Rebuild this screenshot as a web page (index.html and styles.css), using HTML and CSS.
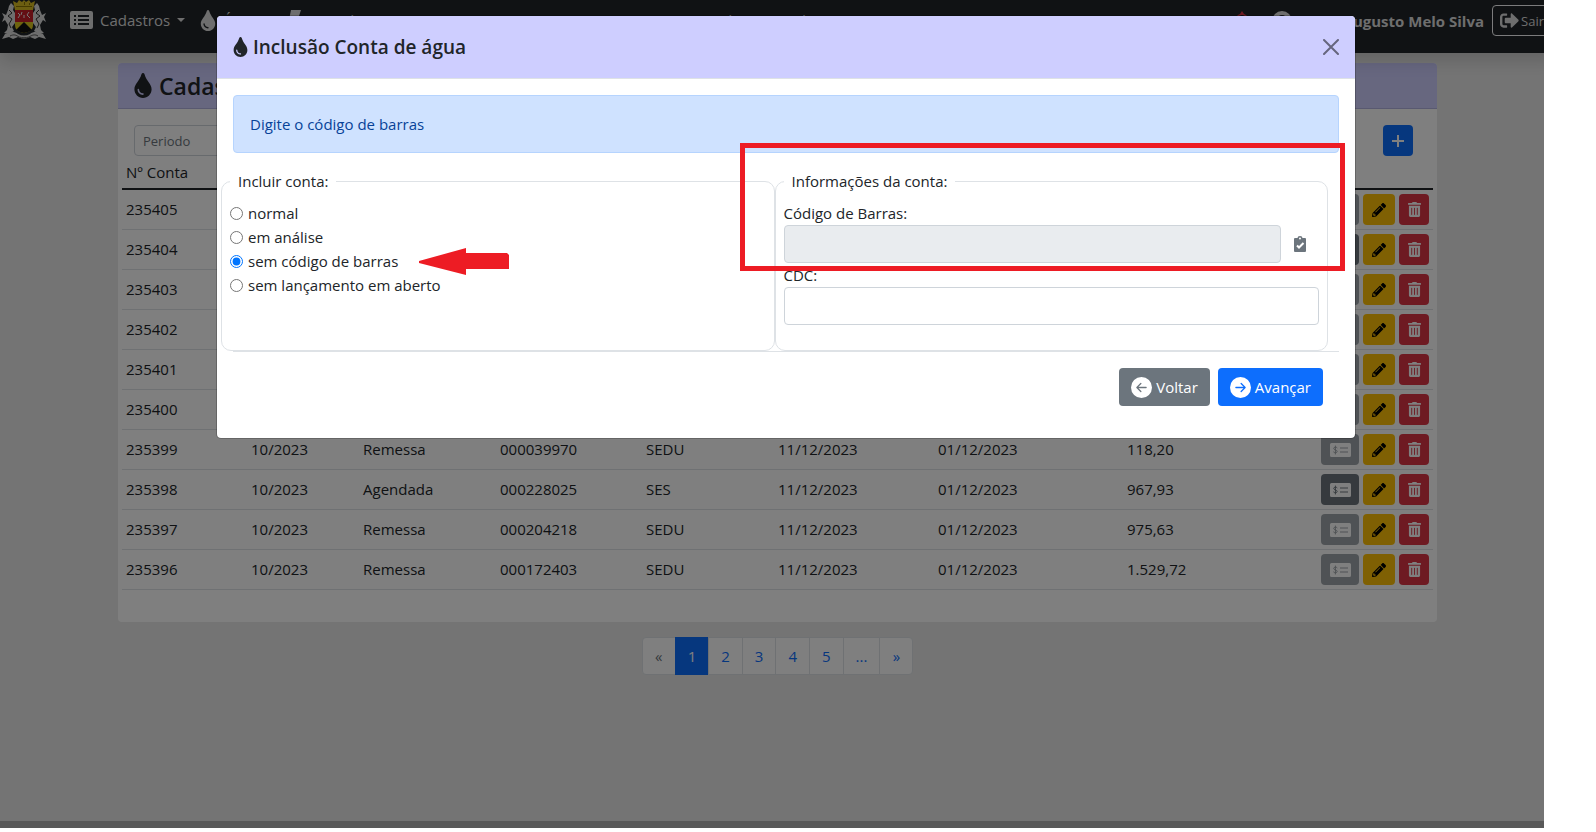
FILE: index.html
```html
<!DOCTYPE html>
<html lang="pt-br">
<head>
    <meta charset="UTF-8">
    <meta name="viewport" content="width=device-width, initial-scale=1.0">
    <title>Cadastro Conta de água</title>
    <link rel="stylesheet" href="styles.css">
</head>
<body>
    <!-- Icons -->
    <svg class="sprite" aria-hidden="true">
        <symbol id="i-drop" viewBox="0 0 352 512"><path d="M205.22 22.09c-7.94-28.78-49.44-30.12-58.44 0C100.01 179.85 0 222.72 0 333.91 0 432.35 78.72 512 176 512s176-79.65 176-178.09c0-111.75-99.79-153.34-146.78-311.82zM176 448c-61.75 0-112-50.25-112-112 0-8.84 7.16-16 16-16s16 7.16 16 16c0 44.11 35.89 80 80 80 8.84 0 16 7.16 16 16s-7.16 16-16 16z"/></symbol>
        <symbol id="i-list" viewBox="0 0 23 18"><path fill-rule="evenodd" d="M2 0h19a2 2 0 0 1 2 2v14a2 2 0 0 1-2 2H2a2 2 0 0 1-2-2V2a2 2 0 0 1 2-2zM4 4v2h2V4zM8 4v2h11V4zM4 8v2h2V8zM8 8v2h11V8zM4 12v2h2v-2zM8 12v2h11v-2z"/></symbol>
        <symbol id="i-exit" viewBox="0 0 512 512"><path d="M497 273L329 441c-15 15-41 4.5-41-17v-96H152c-13.3 0-24-10.7-24-24v-96c0-13.3 10.7-24 24-24h136V88c0-21.4 25.9-32 41-17l168 168c9.3 9.4 9.3 24.6 0 34zM192 436v-40c0-6.6-5.4-12-12-12H96c-17.7 0-32-14.3-32-32V160c0-17.7 14.3-32 32-32h84c6.6 0 12-5.4 12-12V76c0-6.6-5.4-12-12-12H96c-53 0-96 43-96 96v192c0 53 43 96 96 96h84c6.6 0 12-5.4 12-12z"/></symbol>
        <symbol id="i-trash" viewBox="0 0 448 512"><path d="M32 464a48 48 0 0 0 48 48h288a48 48 0 0 0 48-48V128H32zm272-256a16 16 0 0 1 32 0v224a16 16 0 0 1-32 0zm-96 0a16 16 0 0 1 32 0v224a16 16 0 0 1-32 0zm-96 0a16 16 0 0 1 32 0v224a16 16 0 0 1-32 0zM432 32H312l-9.4-18.7A24 24 0 0 0 281.1 0H166.8a23.72 23.72 0 0 0-21.4 13.3L136 32H16A16 16 0 0 0 0 48v32a16 16 0 0 0 16 16h416a16 16 0 0 0 16-16V48a16 16 0 0 0-16-16z"/></symbol>
        <symbol id="i-pencil" viewBox="0 0 512 512"><path d="M497.9 142.1l-46.1 46.1c-4.7 4.7-12.3 4.7-17 0l-111-111c-4.7-4.7-4.7-12.3 0-17l46.1-46.1c18.7-18.7 49.1-18.7 67.9 0l60.1 60.1c18.8 18.7 18.8 49.1 0 67.9zM284.2 99.8L21.6 362.4.4 483.9c-2.9 16.4 11.4 30.6 27.8 27.8l121.5-21.3 262.6-262.6c4.7-4.7 4.7-12.3 0-17l-111-111c-4.8-4.7-12.4-4.7-17.1 0zM124.1 339.9c-5.5-5.5-5.5-14.3 0-19.8l154-154c5.5-5.5 14.3-5.5 19.8 0s5.5 14.3 0 19.8l-154 154c-5.5 5.5-14.3 5.5-19.8 0zM88 424h48v36.3l-64.5 11.3-31.1-31.1L51.7 376H88v48z"/></symbol>
        <symbol id="i-check" viewBox="0 0 21 14"><path fill-rule="evenodd" d="M1.500 0h18A1.500 1.500 0 0 1 21 1.500v11a1.500 1.500 0 0 1-1.500 1.500h-18A1.500 1.500 0 0 1 0 12.500v-11A1.500 1.500 0 0 1 1.500 0zM10 4.500v1h8v-1zM10 8.500v1h8v-1z"/><path class="cut" d="M7.300 5C6.600 3.800 3.700 3.900 3.700 5.400c0 1.700 3.500 1.300 3.500 3.100 0 1.500-3 1.600-3.800.3M5.400 2.600v8.800"/></symbol>
        <symbol id="i-left" viewBox="0 0 16 16"><path d="M8 0a8 8 0 1 0 0 16A8 8 0 0 0 8 0zm3.5 7.500a.5.5 0 0 1 0 1H5.707l2.147 2.146a.5.5 0 0 1-.708.708l-3-3a.5.5 0 0 1 0-.708l3-3a.5.5 0 1 1 .708.708L5.707 7.500H11.500z"/></symbol>
        <symbol id="i-right" viewBox="0 0 16 16"><path d="M8 0a8 8 0 1 1 0 16A8 8 0 0 1 8 0zM4.500 7.500a.5.5 0 0 0 0 1h5.793l-2.147 2.146a.5.5 0 0 0 .708.708l3-3a.5.5 0 0 0 0-.708l-3-3a.5.5 0 1 0-.708.708L10.293 7.500H4.500z"/></symbol>
    </svg>

    <div class="window">
        <div class="app">
            <nav class="navbar">
                <a class="brand" href="#" aria-label="Início">
                    <svg width="44" height="40" viewBox="0 0 44 40">
                        <path fill="#d8bc22" d="M11 1l4 2 2-3 3 2 2-2 2 2 3-2 2 3 4-2-2 9H13z"/>
                        <path fill="#8a7400" d="M14 6h16v1H14zM17 3l1 2M22 2h1v3h-1zM27 3h1v2h-1z"/>
                        <path fill="#dcdcdc" d="M9 3l3 3-1 4 2 3v10l-3 4 2 4-5 3-5-1 3-3 1-5-3-5-3 2 2-5-2-4 4 2 2-5 1-4z"/>
                        <path fill="#dcdcdc" d="M35 3l-3 3 1 4-2 3v10l3 4-2 4 5 3 5-1-3-3-1-5 3-5 3 2-2-5 2-4-4 2-2-5-1-4z"/>
                        <path fill="none" stroke="#333" d="M7 10l3 3-4 3 4 3-3 5 2 4M37 10l-3 3 4 3-4 3 3 5-2 4"/>
                        <path fill="#c81e28" d="M13 10h18v12H13z"/>
                        <path fill="none" stroke="#eee" d="M16 13l2 2-2 3M20 12l-1 3M27 12l-2 3 3 3M22 15v3"/>
                        <path fill="#dcc61e" d="M13 22h18v3c0 5-4 7-9 8-5-1-9-3-9-8z"/>
                        <path fill="#111" d="M22 22l8 8-4 2-4 1-4-1-4-2z"/>
                        <path fill="#dcdcdc" d="M3 34c5-2 9-3 13 0 4 2 8 2 12 0 4-3 8-2 13 0l3 5-7-2-4 2-5-2c-4 2-8 2-12 0l-5 2-4-2-7 2z"/>
                        <path fill="none" stroke="#555" d="M8 36c4-2 6-1 9 1 3 1 7 1 10 0 3-2 6-3 9-1"/>
                    </svg>
                </a>
                <a class="nav-link first" href="#"><svg width="23" height="18"><use href="#i-list"/></svg>Cadastros<span class="caret"></span></a>
                <a class="nav-link" href="#"><svg width="16" height="21"><use href="#i-drop"/></svg>Água<span class="caret"></span></a>
                <a class="nav-link" href="#"><svg width="16" height="20" viewBox="0 0 16 20"><path d="M3 0h10l-2 6h3L6 20l2-10H1z"/></svg>Pagador<span class="caret"></span></a>
                <span class="nav-title">Gestão de Contas de Consumo</span>
                <div class="nav-user">
                    <svg class="bell" width="16" height="20" viewBox="0 0 16 20"><path fill-rule="evenodd" d="M8 0l2 3c3 1 4 3 4 7l2 5H0l2-5c0-4 1-6 4-7zM8 4c-3 0-4 2-4 6l-1 3h10l-1-3c0-4-1-6-4-6zM6 17h4l-2 3z"/></svg>
                    <svg width="20" height="20" viewBox="0 0 20 20"><path fill-rule="evenodd" d="M10 0a10 10 0 1 1 0 20 10 10 0 0 1 0-20zm0 4a4 4 0 1 0 0 8 4 4 0 0 0 0-8z"/></svg>
                    <strong>Allan Augusto Melo Silva</strong>
                    <button class="btn-exit" type="button"><svg width="19" height="19"><use href="#i-exit"/></svg>Sair</button>
                </div>
            </nav>

            <main class="container">
                <section class="card">
                    <h1 class="card-header"><svg width="18" height="25"><use href="#i-drop"/></svg>Cadastro Conta de água</h1>
                    <div class="filter">
                        <input type="text" placeholder="Periodo" aria-label="Periodo">
                        <button class="btn-add" type="button" aria-label="Incluir"><svg width="12" height="12" viewBox="0 0 12 12"><path d="M5 0h2v5h5v2H7v5H5V7H0V5h5z"/></svg></button>
                    </div>
                    <table class="table">
                        <colgroup>
                            <col class="c-conta"><col class="c-periodo"><col class="c-status"><col class="c-cdc"><col class="c-orgao"><col class="c-data"><col class="c-venc"><col><col class="c-acoes">
                        </colgroup>
                        <thead>
                            <tr><th>Nº Conta</th><th>Periodo</th><th>Status</th><th>CDC</th><th>Secretaria</th><th>Vencimento</th><th>Pagamento</th><th>Valor</th><th></th></tr>
                        </thead>
                        <tbody>
                            <tr><td>235405</td><td>10/2023</td><td>Remessa</td><td>000172411</td><td>SEDU</td><td>11/12/2023</td><td>01/12/2023</td><td>210,44</td>
                                <td class="actions"><button class="b-pay" disabled aria-label="Pagamento"><svg><use href="#i-check"/></svg></button><button class="b-edit" aria-label="Editar"><svg><use href="#i-pencil"/></svg></button><button class="b-del" aria-label="Excluir"><svg><use href="#i-trash"/></svg></button></td></tr>
                            <tr><td>235404</td><td>10/2023</td><td>Agendada</td><td>000172410</td><td>SES</td><td>11/12/2023</td><td>01/12/2023</td><td>342,10</td>
                                <td class="actions"><button class="b-pay" aria-label="Pagamento"><svg><use href="#i-check"/></svg></button><button class="b-edit" aria-label="Editar"><svg><use href="#i-pencil"/></svg></button><button class="b-del" aria-label="Excluir"><svg><use href="#i-trash"/></svg></button></td></tr>
                            <tr><td>235403</td><td>10/2023</td><td>Remessa</td><td>000172409</td><td>SEDU</td><td>11/12/2023</td><td>01/12/2023</td><td>118,20</td>
                                <td class="actions"><button class="b-pay" disabled aria-label="Pagamento"><svg><use href="#i-check"/></svg></button><button class="b-edit" aria-label="Editar"><svg><use href="#i-pencil"/></svg></button><button class="b-del" aria-label="Excluir"><svg><use href="#i-trash"/></svg></button></td></tr>
                            <tr><td>235402</td><td>10/2023</td><td>Remessa</td><td>000172408</td><td>SEDU</td><td>11/12/2023</td><td>01/12/2023</td><td>118,20</td>
                                <td class="actions"><button class="b-pay" disabled aria-label="Pagamento"><svg><use href="#i-check"/></svg></button><button class="b-edit" aria-label="Editar"><svg><use href="#i-pencil"/></svg></button><button class="b-del" aria-label="Excluir"><svg><use href="#i-trash"/></svg></button></td></tr>
                            <tr><td>235401</td><td>10/2023</td><td>Remessa</td><td>000172407</td><td>SEDU</td><td>11/12/2023</td><td>01/12/2023</td><td>118,20</td>
                                <td class="actions"><button class="b-pay" disabled aria-label="Pagamento"><svg><use href="#i-check"/></svg></button><button class="b-edit" aria-label="Editar"><svg><use href="#i-pencil"/></svg></button><button class="b-del" aria-label="Excluir"><svg><use href="#i-trash"/></svg></button></td></tr>
                            <tr><td>235400</td><td>10/2023</td><td>Remessa</td><td>000172406</td><td>SEDU</td><td>11/12/2023</td><td>01/12/2023</td><td>118,20</td>
                                <td class="actions"><button class="b-pay" disabled aria-label="Pagamento"><svg><use href="#i-check"/></svg></button><button class="b-edit" aria-label="Editar"><svg><use href="#i-pencil"/></svg></button><button class="b-del" aria-label="Excluir"><svg><use href="#i-trash"/></svg></button></td></tr>
                            <tr><td>235399</td><td>10/2023</td><td>Remessa</td><td>000039970</td><td>SEDU</td><td>11/12/2023</td><td>01/12/2023</td><td>118,20</td>
                                <td class="actions"><button class="b-pay" disabled aria-label="Pagamento"><svg><use href="#i-check"/></svg></button><button class="b-edit" aria-label="Editar"><svg><use href="#i-pencil"/></svg></button><button class="b-del" aria-label="Excluir"><svg><use href="#i-trash"/></svg></button></td></tr>
                            <tr><td>235398</td><td>10/2023</td><td>Agendada</td><td>000228025</td><td>SES</td><td>11/12/2023</td><td>01/12/2023</td><td>967,93</td>
                                <td class="actions"><button class="b-pay" aria-label="Pagamento"><svg><use href="#i-check"/></svg></button><button class="b-edit" aria-label="Editar"><svg><use href="#i-pencil"/></svg></button><button class="b-del" aria-label="Excluir"><svg><use href="#i-trash"/></svg></button></td></tr>
                            <tr><td>235397</td><td>10/2023</td><td>Remessa</td><td>000204218</td><td>SEDU</td><td>11/12/2023</td><td>01/12/2023</td><td>975,63</td>
                                <td class="actions"><button class="b-pay" disabled aria-label="Pagamento"><svg><use href="#i-check"/></svg></button><button class="b-edit" aria-label="Editar"><svg><use href="#i-pencil"/></svg></button><button class="b-del" aria-label="Excluir"><svg><use href="#i-trash"/></svg></button></td></tr>
                            <tr><td>235396</td><td>10/2023</td><td>Remessa</td><td>000172403</td><td>SEDU</td><td>11/12/2023</td><td>01/12/2023</td><td>1.529,72</td>
                                <td class="actions"><button class="b-pay" disabled aria-label="Pagamento"><svg><use href="#i-check"/></svg></button><button class="b-edit" aria-label="Editar"><svg><use href="#i-pencil"/></svg></button><button class="b-del" aria-label="Excluir"><svg><use href="#i-trash"/></svg></button></td></tr>
                        </tbody>
                    </table>
                </section>

                <nav class="pagination" aria-label="Paginação">
                    <span>«</span>
                    <a class="active" href="#">1</a>
                    <a href="#">2</a>
                    <a href="#">3</a>
                    <a href="#">4</a>
                    <a href="#">5</a>
                    <a href="#">...</a>
                    <a href="#">»</a>
                </nav>
            </main>
            <footer class="footer"></footer>
        </div>

        <!-- Modal -->
        <div class="backdrop">
            <form class="modal" role="dialog" aria-labelledby="modalTitle">
                <div class="modal-header">
                    <h2 id="modalTitle"><svg width="15" height="20"><use href="#i-drop"/></svg>Inclusão Conta de água</h2>
                    <button class="btn-close" type="button" aria-label="Fechar"><svg width="16" height="16" viewBox="0 0 16 16"><path d="M1 1l14 14M15 1L1 15"/></svg></button>
                </div>
                <div class="modal-body">
                    <div class="alert">Digite o código de barras</div>
                    <div class="row">
                        <fieldset>
                            <legend>Incluir conta:</legend>
                            <label class="radio"><input type="radio" name="tipo">normal</label>
                            <label class="radio"><input type="radio" name="tipo">em análise</label>
                            <label class="radio"><input type="radio" name="tipo" checked>sem código de barras</label>
                            <label class="radio"><input type="radio" name="tipo">sem lançamento em aberto</label>
                        </fieldset>
                        <fieldset>
                            <legend>Informações da conta:</legend>
                            <label for="codigo">Código de Barras:</label>
                            <div class="input-row">
                                <input class="form-control" id="codigo" type="text" disabled>
                                <button class="btn-paste" type="button" aria-label="Colar"><svg width="14" height="16" viewBox="0 0 14 16"><path fill-rule="evenodd" d="M4.500 2a2.500 2 0 0 1 5 0H12a1 1 0 0 1 1 1v12a1 1 0 0 1-1 1H2a1 1 0 0 1-1-1V3a1 1 0 0 1 1-1zM7 1.500a1 1 0 1 0 0 2 1 1 0 0 0 0-2z"/><path class="tick" d="M4 9.500l2 2 4.500-4.500"/></svg></button>
                            </div>
                            <label for="cdc">CDC:</label>
                            <input class="form-control" id="cdc" type="text">
                        </fieldset>
                    </div>
                    <div class="modal-footer">
                        <button class="btn btn-secondary" type="button"><svg width="21" height="21"><use href="#i-left"/></svg>Voltar</button>
                        <button class="btn btn-primary" type="button"><svg width="21" height="21"><use href="#i-right"/></svg>Avançar</button>
                    </div>
                </div>
                <div class="mark-box"></div>
                <svg class="mark-arrow" width="90" height="28" viewBox="0 0 90 28"><path d="M0 13L47 0v5h41l2 2v14H47v6L0 15z"/></svg>
            </form>
        </div>
    </div>
</body>
</html>
```

FILE: styles.css
```css
* {
    box-sizing: border-box;
}
body {
    margin: 0;
    padding: 0 52px 4px 0;
    background-color: #fff;
    color: #212529;
    font-family: "Open Sans", "Noto Sans", sans-serif;
    font-size: 15px;
    line-height: 24px;
}
button, input {
    font: inherit;
    color: inherit;
}
button {
    display: inline-flex;
    align-items: center;
    justify-content: center;
    padding: 0;
    border: 0;
    border-radius: 4px;
}
svg {
    fill: currentColor;
    flex: none;
}
a {
    text-decoration: none;
}
.sprite {
    display: none;
}
.window {
    position: relative;
    overflow: hidden;
}
.app {
    display: flex;
    flex-direction: column;
    min-height: calc(100vh - 4px);
    margin-right: -11px;
    background-color: #e9e9e9;
}

/* Navbar */
.navbar {
    position: relative;
    display: flex;
    align-items: flex-start;
    height: 53px;
    padding: 0 3px 0 2px;
    background-color: #212529;
    box-shadow: 0 8px 16px rgba(0, 0, 0, .15);
    color: #ddd;
}
.brand {
    height: 40px;
}
.nav-link {
    display: flex;
    align-items: center;
    gap: 7px;
    height: 40px;
    margin-left: 15px;
    color: #ddd;
}
.nav-link.first {
    margin-left: 24px;
}
.caret {
    border: 4px solid transparent;
    border-top-color: currentColor;
    border-bottom: 0;
}
.nav-title {
    position: absolute;
    left: 50%;
    top: 8px;
    transform: translateX(-50%);
}
.nav-user {
    display: flex;
    align-items: center;
    gap: 8px;
    height: 41px;
    margin-left: auto;
}
.bell {
    margin-right: 14px;
    color: #dc3545;
}
.btn-exit {
    gap: 2px;
    height: 31px;
    padding: 0 7px;
    border: 1px solid #f8f9fa;
    background-color: transparent;
    font-size: 13px;
}

/* Card */
.container {
    flex: 1;
    width: 100%;
    max-width: 1319px;
    margin: 0 auto;
    padding-top: 10px;
}
.card {
    padding-bottom: 32px;
    border-radius: 4px;
    background-color: #fff;
}
.card-header {
    display: flex;
    align-items: center;
    gap: 7px;
    height: 46px;
    margin: 0;
    padding: 0 16px;
    border-bottom: 1px solid #b3b3e0;
    border-radius: 4px 4px 0 0;
    background-color: #ceceff;
    font-size: 23px;
    font-weight: 600;
}
.filter {
    display: flex;
    justify-content: space-between;
    padding: 16px 24px 0 16px;
}
.filter input {
    width: 140px;
    height: 31px;
    padding: 0 8px;
    border: 1px solid #ced4da;
    border-radius: 4px;
    background-color: #fff;
    font-size: 13px;
}
.filter input::placeholder {
    color: #6c757d;
}
.btn-add {
    width: 30px;
    height: 31px;
    background-color: #0d6efd;
    color: #fff;
}
.table {
    width: calc(100% - 8px);
    margin: 0 4px;
    border-collapse: separate;
    border-spacing: 0;
    table-layout: fixed;
}
.table th, .table td {
    padding: 4px;
    border-bottom: 1px solid #dee2e6;
    font-weight: 400;
    text-align: left;
}
.table th {
    border-bottom: 2px solid #212529;
}
.table td {
    height: 40px;
    padding-bottom: 6px;
}
.c-conta { width: 125px; }
.c-periodo { width: 112px; }
.c-status { width: 137px; }
.c-cdc { width: 146px; }
.c-orgao { width: 132px; }
.c-data { width: 160px; }
.c-venc { width: 189px; }
.c-acoes { width: 116px; }
.table .actions {
    display: flex;
    gap: 4px;
}
.actions button {
    height: 31px;
}
.b-pay {
    width: 38px;
    background-color: #6c757d;
    color: #fff;
}
.b-pay:disabled {
    opacity: .65;
}
.b-pay svg {
    width: 21px;
    height: 14px;
}
.cut {
    fill: none;
    stroke: #6c757d;
}
.b-edit {
    width: 32px;
    background-color: #ffc107;
    color: #000;
}
.b-edit svg {
    width: 14px;
    height: 14px;
}
.b-del {
    width: 30px;
    background-color: #dc3545;
    color: #fff;
}
.b-del svg {
    width: 13px;
    height: 15px;
}

/* Pagination */
.pagination {
    display: flex;
    justify-content: center;
    margin-top: 15px;
}
.pagination > * {
    min-width: 34px;
    padding: 6px 12px;
    border: 1px solid #dee2e6;
    margin-left: -1px;
    background-color: #fff;
    color: #0d6efd;
    text-align: center;
}
.pagination span {
    margin-left: 0;
    border-radius: 4px 0 0 4px;
    color: #6c757d;
}
.pagination a:last-child {
    border-radius: 0 4px 4px 0;
}
.pagination .active {
    border-color: #0d6efd;
    background-color: #0d6efd;
    color: #fff;
}
.footer {
    height: 7px;
    background-color: #b2b2b2;
}

/* Modal */
.backdrop {
    position: absolute;
    z-index: 10;
    inset: 0 -28px 0 0;
    padding: 15px;
    background-color: rgba(0, 0, 0, .5);
}
.modal {
    position: relative;
    max-width: 1140px;
    margin: 0 auto;
    border: 1px solid rgba(0, 0, 0, .2);
    border-radius: 5px;
    background-color: #fff;
    background-clip: padding-box;
}
.modal-header {
    display: flex;
    align-items: center;
    justify-content: space-between;
    height: 63px;
    padding: 0 16px;
    border-bottom: 1px solid #dee2e6;
    border-radius: 4px 4px 0 0;
    background-color: #ceceff;
}
.modal-header h2 {
    display: flex;
    align-items: center;
    gap: 5px;
    margin: 0;
    font-size: 19px;
    font-weight: 600;
}
.btn-close {
    background-color: transparent;
    opacity: .5;
}
.btn-close path {
    stroke: #000;
    stroke-width: 2;
    stroke-linecap: round;
}
.modal-body {
    padding: 16px;
}
.alert {
    margin-bottom: 16px;
    padding: 16px;
    border: 1px solid #b6d4fe;
    border-radius: 4px;
    background-color: #cfe2ff;
    color: #084298;
}
.row {
    display: grid;
    grid-template-columns: 1fr 1fr;
    margin: 0 11px 0 -12px;
}
fieldset {
    min-width: 0;
    margin: 0;
    padding: 8px 8px 25px;
    border: 1px solid #dee2e6;
    border-radius: 10px;
}
legend {
    padding: 0 8px;
}
fieldset label {
    display: block;
}
.radio {
    display: flex;
    align-items: center;
    gap: 5px;
}
.radio input {
    width: 13px;
    height: 13px;
    margin: 0;
}
.form-control {
    display: block;
    width: 100%;
    height: 38px;
    padding: 6px 12px;
    border: 1px solid #ced4da;
    border-radius: 4px;
    background-color: #fff;
}
.form-control:disabled {
    background-color: #e9ecef;
}
.input-row {
    display: flex;
}
.btn-paste {
    flex: none;
    width: 38px;
    background-color: transparent;
    color: #6c757d;
}
.tick {
    fill: none;
    stroke: #fff;
    stroke-width: 2;
}
.modal-footer {
    display: flex;
    justify-content: flex-end;
    gap: 8px;
    padding: 16px;
    border-top: 1px solid #dee2e6;
}
.btn {
    gap: 4px;
    height: 38px;
    padding: 0 12px;
    color: #fff;
    font-weight: 500;
}
.btn-secondary {
    background-color: #6c757d;
}
.btn-primary {
    background-color: #0d6efd;
}

/* Highlights over the form */
.mark-box {
    position: absolute;
    top: 127px;
    left: 523px;
    right: 10px;
    height: 128px;
    border: 5px solid #ed1c24;
    pointer-events: none;
}
.mark-arrow {
    position: absolute;
    top: 232px;
    left: 202px;
    color: #ed1c24;
}
```
